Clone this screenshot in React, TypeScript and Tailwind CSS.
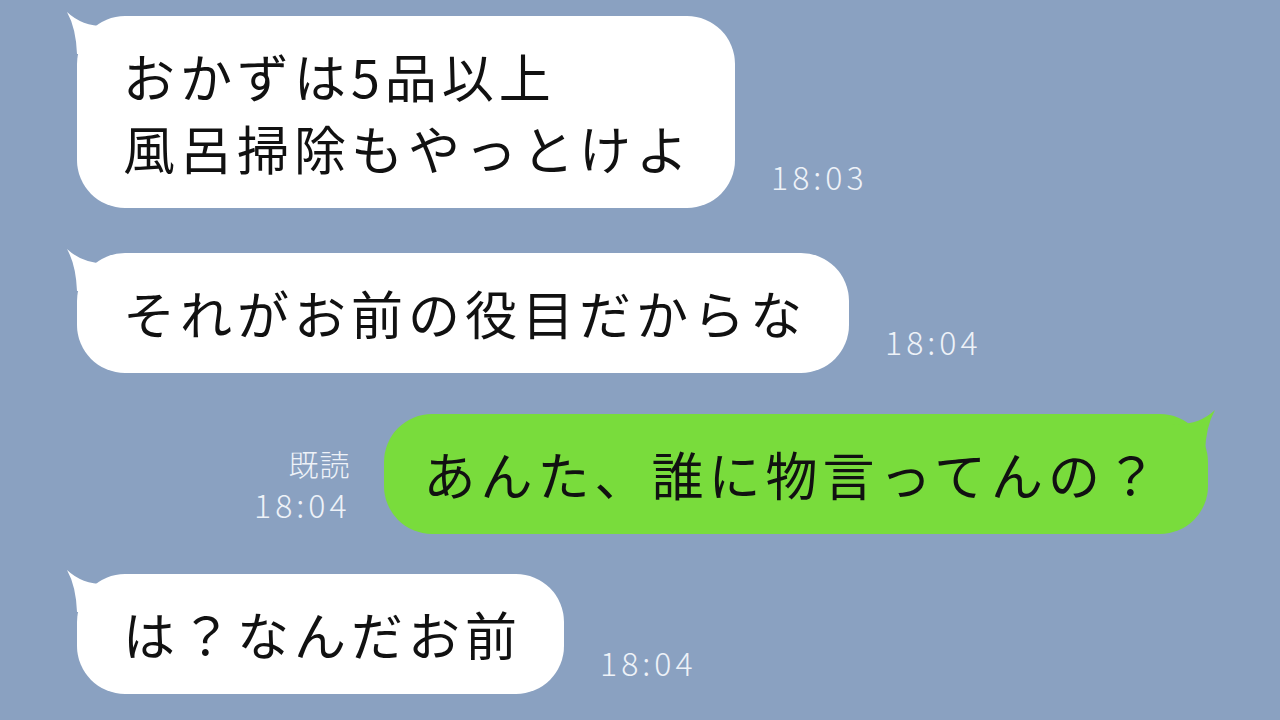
import React from 'react';

type Msg = {
  id: number;
  mine: boolean;
  lines: string[];
  time: string;
  read?: boolean;
};

const MESSAGES: Msg[] = [
  { id: 1, mine: false, lines: ['おかずは5品以上', '風呂掃除もやっとけよ'], time: '18:03' },
  { id: 2, mine: false, lines: ['それがお前の役目だからな'], time: '18:04' },
  { id: 3, mine: true, lines: ['あんた、誰に物言ってんの？'], time: '18:04', read: true },
  { id: 4, mine: false, lines: ['は？なんだお前'], time: '18:04' },
];

// gap above each row, taken from the screenshot
const ROW_GAPS = ['mt-0', 'mt-[45px]', 'mt-[41px]', 'mt-[40px]'];

function Tail({ mine }: { mine: boolean }) {
  return (
    <svg
      width="50"
      height="50"
      viewBox="0 0 50 50"
      className={`absolute top-[-6px] ${mine ? 'right-[-10px] -scale-x-100' : 'left-[-13px]'}`}
    >
      <path
        d="M3 2 Q12 18 13 44 L46 44 L46 16 Q20 18 3 2 Z"
        fill={mine ? '#79dc3c' : '#ffffff'}
      />
    </svg>
  );
}

function Bubble({ msg }: { msg: Msg }) {
  return (
    <div
      className={`relative rounded-[48px] py-[24px] text-[52px] leading-[72px] tracking-[5px] text-[#111] whitespace-nowrap ${
        msg.mine ? 'bg-[#79dc3c] pl-[40px] pr-[46px]' : 'bg-white pl-[46px] pr-[42px]'
      }`}
    >
      <Tail mine={msg.mine} />
      <div className="relative">
        {msg.lines.map((line) => (
          <div key={line}>{line}</div>
        ))}
      </div>
    </div>
  );
}

function Meta({ msg }: { msg: Msg }) {
  if (msg.read) {
    return (
      <div className="flex flex-col items-end mb-[14px] text-[#eef2f8] font-light">
        <span className="text-[30px] leading-none tracking-[1px]">既読</span>
        <span className="mt-[10px] text-[32px] leading-none tracking-[4px]">{msg.time}</span>
      </div>
    );
  }
  return (
    <span className="mb-[16px] text-[32px] leading-none tracking-[4px] font-light text-[#eef2f8]">
      {msg.time}
    </span>
  );
}

export default function App() {
  return (
    <div className="w-[1280px] h-[720px] overflow-hidden bg-[#8aa1c1] pt-[16px] font-['Noto_Sans_CJK_JP','Noto_Sans',sans-serif]">
      <div className="flex flex-col">
        {MESSAGES.map((msg, i) =>
          msg.mine ? (
            <div key={msg.id} className={`flex items-end justify-end gap-[33px] pr-[72px] ${ROW_GAPS[i]}`}>
              <Meta msg={msg} />
              <Bubble msg={msg} />
            </div>
          ) : (
            <div key={msg.id} className={`flex items-end gap-[36px] pl-[77px] ${ROW_GAPS[i]}`}>
              <Bubble msg={msg} />
              <Meta msg={msg} />
            </div>
          )
        )}
      </div>
    </div>
  );
}
